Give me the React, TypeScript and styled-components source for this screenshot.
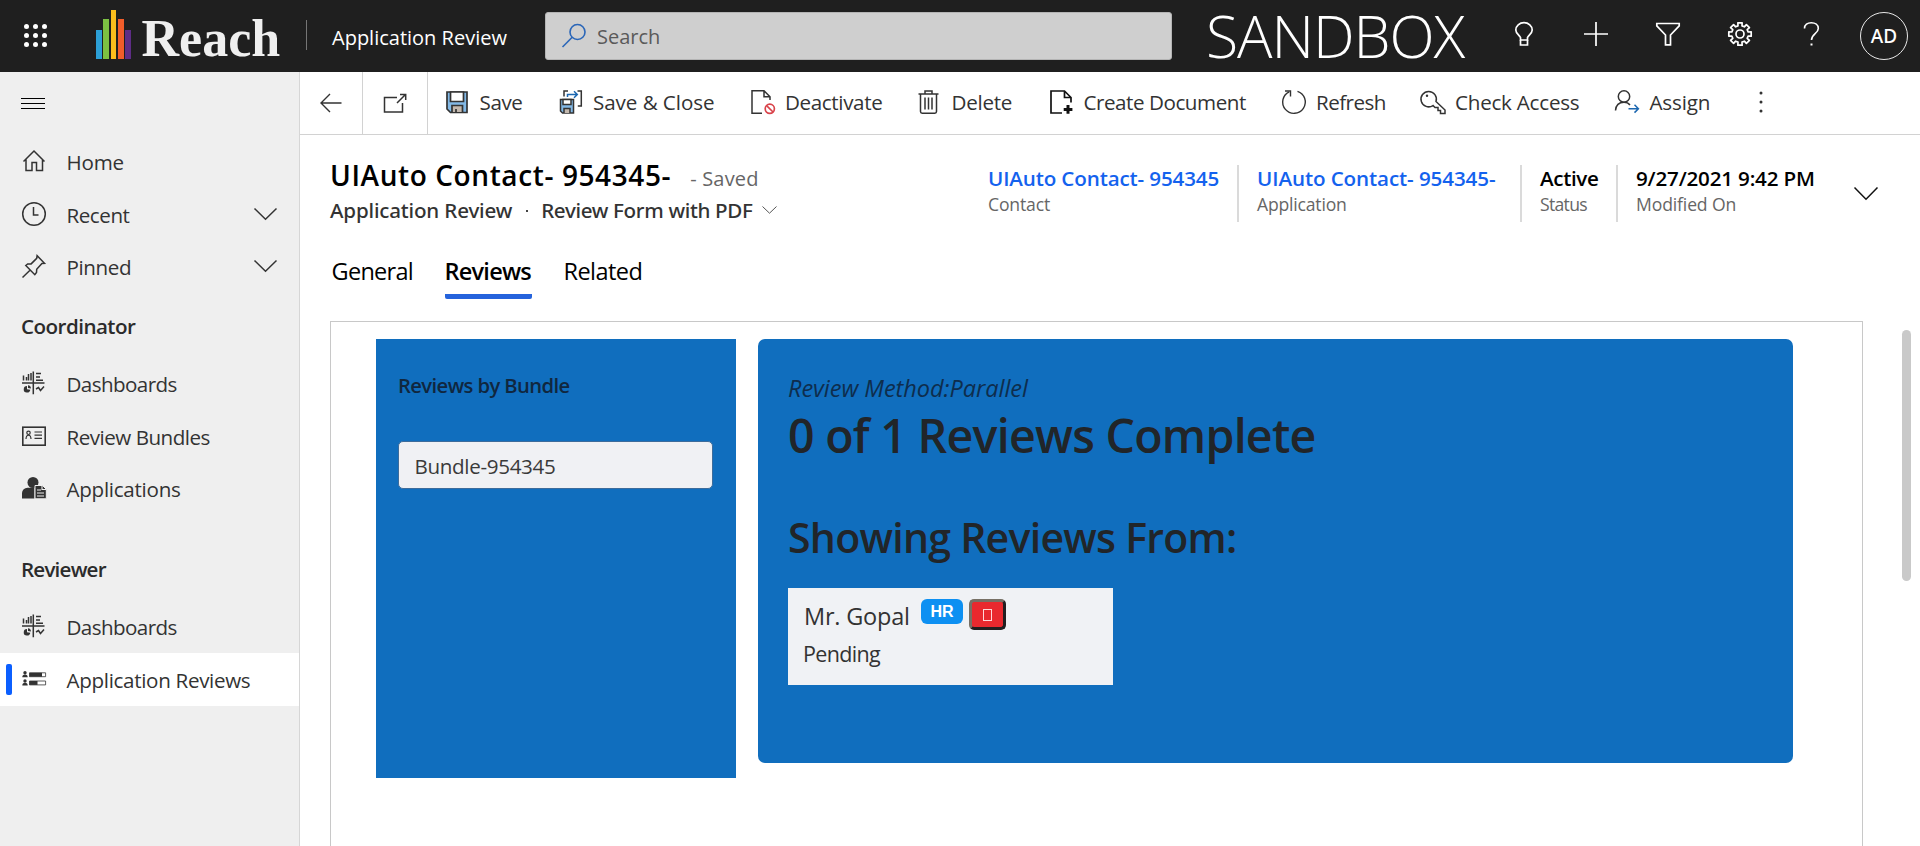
import React from "react";
import styled, { createGlobalStyle } from "styled-components";

const GlobalStyle = createGlobalStyle`
  * { box-sizing: border-box; }
  body {
    margin: 0;
    background: #fff;
    color: #333;
    font-family: "Open Sans", "Noto Sans", sans-serif;
    overflow: hidden;
  }
`;

const Page = styled.div`
  display: flex;
  flex-direction: column;
  width: 1920px;
  height: 846px;
  overflow: hidden;
`;

/* ---------- top bar ---------- */

const TopBar = styled.header`
  display: flex;
  align-items: center;
  flex: none;
  height: 72px;
  background: #1f1f1f;
  color: #fff;
`;

const Waffle = styled.div`
  display: grid;
  grid-template-columns: repeat(3, 5px);
  gap: 4px;
  margin: 0 49px 2px 24px;
`;

const WaffleDot = styled.i`
  width: 5px;
  height: 5px;
  border-radius: 50%;
  background: #fff;
`;

const Logo = styled.div`
  display: flex;
  align-items: flex-end;
  width: 210px;
  height: 72px;
`;

const LogoBars = styled.div`
  display: flex;
  align-items: flex-end;
  gap: 1.4px;
  width: 45.5px;
  padding-bottom: 13.5px;
`;

const LogoBar = styled.i<{ $h: number; $c: string }>`
  width: 5.9px;
  height: ${(p) => p.$h}px;
  background: ${(p) => p.$c};
`;

const LogoName = styled.span`
  height: 69px;
  color: #efefef;
  font: bold 52px/72px "Liberation Serif", serif;
`;

const BarDivider = styled.i`
  width: 1px;
  height: 30px;
  margin-bottom: 2px;
  background: #757575;
`;

const AppName = styled.span`
  width: 213px;
  margin-left: 25px;
  padding-top: 3px;
  font-size: 20px;
  line-height: 28px;
  white-space: nowrap;
`;

const SearchBox = styled.div`
  display: flex;
  align-items: center;
  gap: 11px;
  width: 627px;
  height: 48px;
  padding-left: 16px;
  border: 1px solid #b4b4b4;
  border-radius: 3px;
  background: #cfcfcf;
  color: #5a5a5a;
  font-size: 20px;
  line-height: 28px;
`;

const SearchHint = styled.span`
  padding-top: 2px;
`;

const EnvName = styled.span`
  align-self: flex-start;
  width: 282px;
  margin-left: 34px;
  font-size: 59px;
  font-weight: 300;
  line-height: 70px;
  letter-spacing: -1.07px;
`;

const BarCell = styled.div`
  display: flex;
  align-items: center;
  justify-content: center;
  width: 72px;
  height: 72px;
  padding-bottom: 4px;
`;

const Avatar = styled.div`
  flex: none;
  width: 48px;
  height: 48px;
  margin-top: 4px;
  border: 1.5px solid #e8e8e8;
  border-radius: 50%;
  font-family: "Noto Sans", sans-serif;
  font-size: 19px;
  font-weight: 500;
  line-height: 47px;
  text-align: center;
`;

/* ---------- navigation ---------- */

const Columns = styled.div`
  display: flex;
  flex: 1;
  min-height: 0;
`;

const Sidebar = styled.nav`
  flex: none;
  width: 300px;
  border-right: 1px solid #d6d6d6;
  background: #efefef;
`;

const MenuToggle = styled.div`
  display: flex;
  flex-direction: column;
  gap: 4px;
  height: 63px;
  padding: 26px 0 0 21px;
`;

const MenuLine = styled.i`
  width: 24px;
  height: 1px;
  background: #000;
`;

const NavItem = styled.div<{ $active?: boolean; $ls: number }>`
  display: flex;
  align-items: center;
  height: ${(p) => (p.$active ? 53.5 : 52.5)}px;
  padding: ${(p) => (p.$active ? "0 22px 0 6px" : "0 22px")};
  background: ${(p) => (p.$active ? "#fff" : "transparent")};
  font-size: 20.6px;
  line-height: 28px;
  letter-spacing: ${(p) => p.$ls}px;
`;

const ActiveMark = styled.i`
  width: 6px;
  height: 31px;
  margin-right: 10px;
  border-radius: 2px;
  background: #0b5fff;
`;

const NavLabel = styled.span`
  flex: 1;
  padding: 2px 0 0 20.5px;
  white-space: nowrap;
`;

const NavHeading = styled.h3<{ $top: number; $ls: number }>`
  margin: 0;
  padding: ${(p) => p.$top}px 0 17px 21px;
  color: #2b2b2b;
  font-size: 20.6px;
  font-weight: 600;
  line-height: 28px;
  letter-spacing: ${(p) => p.$ls}px;
`;

/* ---------- command bar ---------- */

const Main = styled.main`
  display: flex;
  flex-direction: column;
  flex: 1;
  min-width: 0;
`;

const CommandBar = styled.div`
  display: flex;
  align-items: center;
  flex: none;
  height: 63px;
  border-bottom: 1px solid #d2d2d2;
`;

const IconCommand = styled.div<{ $w: number }>`
  display: flex;
  align-items: center;
  justify-content: center;
  width: ${(p) => p.$w}px;
  height: 62px;
  padding: 0 1px 1px 0;
  border-right: 1px solid #d2d2d2;
`;

const Commands = styled.div`
  display: flex;
  align-items: center;
  padding: 0 0 2px 17px;
`;

const Command = styled.div<{ $w: number; $ls: number }>`
  display: flex;
  align-items: center;
  gap: 10.5px;
  width: ${(p) => p.$w}px;
  font-size: 20.6px;
  line-height: 28px;
  letter-spacing: ${(p) => p.$ls}px;
  white-space: nowrap;
`;

/* ---------- record header ---------- */

const RecordHeader = styled.div`
  display: flex;
  justify-content: space-between;
  height: 120px;
  padding: 21px 42px 0 30px;
`;

const TitleRow = styled.div`
  display: flex;
  align-items: baseline;
  gap: 19px;
  height: 38px;
  line-height: 38px;
`;

const Title = styled.h1`
  margin: 0;
  color: #000;
  font-size: 28px;
  font-weight: 600;
  line-height: 38px;
  letter-spacing: 0.6px;
`;

const SaveState = styled.span`
  color: #666;
  font-size: 20px;
  letter-spacing: 0.2px;
`;

const SubtitleRow = styled.div`
  display: flex;
  align-items: center;
  margin-top: 1px;
  font-family: "Noto Sans", sans-serif;
  font-size: 20.6px;
  font-weight: 500;
  line-height: 28px;
  letter-spacing: -0.17px;
`;

const SubtitleDot = styled.i`
  width: 2px;
  height: 2px;
  margin: 2px 13px 0 14px;
  background: #444;
`;

const FormName = styled.span`
  padding-top: 1px;
  margin-right: 9px;
  letter-spacing: -0.33px;
`;

const Fields = styled.div`
  display: flex;
  height: 57px;
  margin-top: 9px;
`;

const Field = styled.div<{ $w: number; $first?: boolean }>`
  width: ${(p) => p.$w}px;
  padding-left: ${(p) => (p.$first ? 0 : 18)}px;
  border-left: ${(p) => (p.$first ? "none" : "2px solid #dadada")};
  white-space: nowrap;
`;

const FieldValue = styled.div<{ $link?: boolean; $ls: number }>`
  color: ${(p) => (p.$link ? "#1462ee" : "#000")};
  font-size: 20.6px;
  font-weight: 600;
  line-height: 26px;
  letter-spacing: ${(p) => p.$ls}px;
`;

const FieldLabel = styled.div<{ $ls: number }>`
  padding-top: 2px;
  color: #666;
  font-size: 17.6px;
  line-height: 22px;
  letter-spacing: ${(p) => p.$ls}px;
`;

const HeaderToggle = styled.div`
  padding-top: 22px;
`;

const Tabs = styled.div`
  display: flex;
  gap: 32px;
  height: 66px;
  padding-left: 31.5px;
`;

const Tab = styled.div<{ $active?: boolean; $w: number; $ls: number }>`
  width: ${(p) => p.$w}px;
  height: 44px;
  border-bottom: 5px solid ${(p) => (p.$active ? "#2563dc" : "transparent")};
  border-radius: 2px;
  color: #000;
  font-size: 23.5px;
  font-weight: ${(p) => (p.$active ? 600 : 400)};
  line-height: 32px;
  letter-spacing: ${(p) => p.$ls}px;
  white-space: nowrap;
`;

/* ---------- form body ---------- */

const FormArea = styled.div`
  display: flex;
  flex: 1;
  min-height: 0;
  padding-left: 30px;
`;

const Section = styled.section`
  display: flex;
  align-items: flex-start;
  gap: 22px;
  width: 1533px;
  padding: 17px 0 0 45px;
  border: 1px solid #c8c8c8;
  border-bottom: none;
`;

const ScrollTrack = styled.div`
  padding: 9px 0 0 39px;
`;

const ScrollThumb = styled.div`
  width: 9px;
  height: 251px;
  border-radius: 5px;
  background: #c9c9c9;
`;

const BundlePanel = styled.div`
  width: 360px;
  height: 439px;
  padding: 32px 22px;
  background: #106ebe;
  color: #212529;
`;

const BundleTitle = styled.h4`
  margin: 0;
  color: #10273f;
  font-size: 20.2px;
  font-weight: 600;
  line-height: 28px;
  letter-spacing: -0.58px;
`;

const BundleOption = styled.div`
  width: 315px;
  height: 48px;
  margin-top: 42px;
  padding: 1px 0 0 15.5px;
  border: 1px solid #3d6c9b;
  border-radius: 5px;
  background: #f0f1f4;
  color: #3a3a3a;
  font-size: 20.6px;
  line-height: 46px;
  letter-spacing: -0.33px;
`;

const ReviewPanel = styled.div`
  width: 1035px;
  height: 424px;
  padding: 33px 30px;
  border-radius: 7px;
  background: #106ebe;
  color: #212529;
`;

const Method = styled.div`
  color: #0e2d4d;
  font-size: 23.5px;
  font-style: italic;
  line-height: 32px;
  letter-spacing: -0.03px;
`;

const Progress = styled.h1`
  margin: 3px 0 0;
  font-size: 46.5px;
  font-weight: 600;
  line-height: 56px;
  letter-spacing: -0.73px;
`;

const Showing = styled.h2`
  margin: 49px 0 0;
  font-size: 41px;
  font-weight: 600;
  line-height: 50px;
  letter-spacing: -0.72px;
`;

const ReviewerCard = styled.div`
  width: 325px;
  height: 97px;
  margin-top: 26px;
  padding: 11px 15px;
  background: #f0f2f5;
  color: #333;
`;

const ReviewerRow = styled.div`
  display: flex;
  align-items: flex-start;
  height: 40px;
`;

const ReviewerName = styled.span`
  width: 118px;
  padding: 1px 0 0 1px;
  font-size: 23.5px;
  line-height: 32px;
  letter-spacing: -0.2px;
`;

const RoleBadge = styled.span`
  width: 42px;
  height: 25px;
  border-radius: 6px;
  background: #0d90f2;
  color: #fff;
  font: bold 16px/25px "Liberation Sans", sans-serif;
  text-align: center;
`;

const RemoveButton = styled.div`
  display: flex;
  align-items: center;
  justify-content: center;
  width: 37px;
  height: 31px;
  margin-left: 6px;
  border: 3px solid;
  border-color: #777065 #231f20 #231f20 #777065;
  border-radius: 5px;
  background: #e9292e;
`;

const MissingGlyph = styled.i`
  width: 9px;
  height: 12px;
  border: 1px solid #ffd9d9;
`;

const ReviewStatus = styled.div`
  margin-top: 1px;
  font-size: 21.5px;
  line-height: 28px;
  letter-spacing: -0.65px;
`;

/* ---------- icons ---------- */

const Svg = styled.svg`
  flex: none;
  display: block;
  fill: none;
  overflow: visible;
`;

type IconProps = { children: React.ReactNode; c?: string; s?: number; w?: number; h?: number };
const Icon = ({ children, c = "#333", s = 1.5, w = 24, h = 24 }: IconProps) => (
  <Svg width={w} height={h} viewBox={`0 0 ${w} ${h}`} stroke={c} strokeWidth={s}>
    {children}
  </Svg>
);

const Chevron = ({ w = 23, h = 12, s = 1.5, c = "#333" }) => (
  <Icon w={w} h={h} s={s} c={c}>
    <path d={`M.5 .5 ${w / 2} ${h - 0.8} ${w - 0.5} .5`} />
  </Icon>
);

const HomeIcon = () => (
  <Icon>
    <path d="M1.5 12.5 12 2l10.500 10.500M4 10.500V21.500h6v-8h4.500v8H20.500V10.500" />
  </Icon>
);

const ClockIcon = () => (
  <Icon>
    <circle cx="12" cy="12" r="11.300" />
    <path d="M11.500 5v8h5" />
  </Icon>
);

const PinIcon = () => (
  <Icon>
    <path d="M.5 23.500 8 16.300M3.800 11.500l9 9.200 1.700-2.200.200-3.200 5.200-5.800 2.600-.2-7.400-7.600-.4 2.600-5.600 5.600-3.400.1z" />
  </Icon>
);

const DashboardIcon = () => (
  <Icon s={1.5}>
    <path d="M0 12h22.500M11.300.5v22.800M1.500 4.500v5M4.500 6v3.500M6.500 3v6.500M9 2v7.500" />
    <path d="M14 2.500h5M14 6h4M14 9.300h7M14 18l2.500-1.500 2 3 3.500-4" />
    <path d="M5 15a3.300 3.300 0 1 0 3.300 3.800L5 18.300z" fill="#333" stroke="none" />
    <path d="M6 14.200a3.500 3.500 0 0 1 3 3.300L6 17z" fill="#333" stroke="none" />
  </Icon>
);

const BundleIcon = () => (
  <Icon s={1.6}>
    <rect x=".8" y="3.200" width="22.400" height="18" />
    <circle cx="6.500" cy="8.800" r="1.700" strokeWidth="1.200" />
    <path d="M4 15c.2-5 4.800-5 5 0M12.500 8h7.500M12.500 11.200h7.500M12.500 14.400h7.500" strokeWidth="1.200" />
  </Icon>
);

const ApplicantIcon = () => (
  <Icon s={0}>
    <g fill="#333">
      <circle cx="11" cy="6.500" r="5.500" />
      <path d="M0 22.500v-5.500a5.500 5.500 0 0 1 5.500-5.300h7V22.500z" />
      <path d="M13 9.500h7.500l3.800 3.800V22.800H13z" stroke="#efefef" strokeWidth="1" />
    </g>
    <path d="M15 14h4M15 17h7M15 20h7M20 9.500v4h4" stroke="#efefef" strokeWidth="1.100" />
  </Icon>
);

const ReviewsIcon = () => (
  <Icon s={0.8}>
    <g fill="#333" stroke="none">
      <circle cx="3" cy="5.800" r="1.700" />
      <path d="M.3 10.300a2.700 2.700 0 0 1 5.400 0z" />
      <circle cx="3" cy="14" r="1.700" />
      <path d="M.3 18.500a2.700 2.700 0 0 1 5.400 0z" />
      <rect x="7.500" y="5.800" width="12.500" height="3.900" />
      <rect x="7.500" y="14" width="8" height="3.900" />
    </g>
    <path d="M7.500 5.800H23.600v3.900H7.500zM7.500 14H23.600v3.900H7.500z" />
  </Icon>
);

const BackIcon = () => (
  <Icon s={1.4} w={22} h={20}>
    <path d="M10 1 1 10l9 9M1 10h20.500" />
  </Icon>
);

const PopOutIcon = () => (
  <Icon s={1.5}>
    <path d="M14 6.500H1.500V21H19.500V12" />
    <path d="M14 12 22.500 3.500M17 3.500h5.700V9" />
  </Icon>
);

const SaveIcon = () => (
  <Icon s={1.7}>
    <path d="M2 2h20v20.500H5.500L2 19z" fill="#83b9e6" />
    <path d="M5.500 2h13v9.500h-13z" fill="#fff" />
    <path d="M7 22v-6.500h10.500V22" fill="#c3b8ae" />
    <path d="M11 19v3" />
  </Icon>
);

const SaveCloseIcon = () => (
  <Icon s={1.5}>
    <path d="M1.500 9.500h13V23H3.500l-2-2z" fill="#83b9e6" />
    <path d="M4 9.500h8v5H4z" fill="#fff" />
    <path d="M5 23v-4.500h6V23" fill="#c3b8ae" />
    <path d="M5 6.500V1h4M18.500 1H22.300v15h-3.500" />
    <path d="M8.500 7V4.500h9.500M15 1.300 18.300 4.500 15 7.700" stroke="#1c67b0" />
  </Icon>
);

const DeactivateIcon = () => (
  <Icon s={1.5}>
    <path d="M11 23.200H1V.8h12l6 6V10M13 .8v6h6" />
    <circle cx="18.800" cy="18.800" r="4.600" stroke="#d9434a" strokeWidth="1.700" />
    <path d="m15.600 15.600 6.400 6.400" stroke="#d9434a" strokeWidth="1.700" />
  </Icon>
);

const DeleteIcon = () => (
  <Icon s={1.5}>
    <path d="M1.500 4h20M8 4V1h7v3M3.500 4v17.500q0 1.700 1.700 1.700h12.600q1.700 0 1.700-1.700V4M8 7.500v12M11.500 7.500v12M15 7.500v12" />
  </Icon>
);

const CreateDocIcon = () => (
  <Icon s={1.7} c="#111">
    <path d="M13 23H2V1H15.500l6.500 6.500v5M15.500 1v6.500h6.500" />
    <path d="M19 15v8.700M14.700 19.400h8.700" strokeWidth="3" />
  </Icon>
);

const RefreshIcon = () => (
  <Icon s={1.4}>
    <path d="M15.500 1.300A11.300 11.300 0 1 1 7.200 1.800" />
    <path d="M3 1h5.500V6.500" />
  </Icon>
);

const KeyIcon = () => (
  <Icon s={1.5}>
    <path d="M15 11.500 24 20v3.500h-4.500V20.500h-2.500V17.500h-3l-2-2a7.700 7.700 0 1 1 3-4z" />
    <circle cx="6" cy="5.800" r="1.200" fill="#333" stroke="none" />
  </Icon>
);

const AssignIcon = () => (
  <Icon s={1.5}>
    <circle cx="9" cy="6.500" r="5.700" />
    <path d="M.5 20.500C1 14.500 4.500 12.300 9 12.300c2.800 0 4.600 1 6 2.700" />
    <path d="M13.500 18.700h9.500M19.500 14.800l3.900 3.900-3.900 3.900" stroke="#1c67b0" />
  </Icon>
);

const MoreIcon = () => (
  <Icon w={4} s={0}>
    <g fill="#333">
      <circle cx="2" cy="3" r="1.500" />
      <circle cx="2" cy="12" r="1.500" />
      <circle cx="2" cy="21" r="1.500" />
    </g>
  </Icon>
);

const SearchIcon = () => (
  <Icon c="#2a66b8" s={1.6}>
    <circle cx="15.500" cy="8" r="7.500" />
    <path d="M10.200 13.300.5 23" />
  </Icon>
);

const BulbIcon = () => (
  <Icon c="#fff" s={1.7}>
    <path d="M8.500 18v-2.500C7.500 13 3.800 11.500 3.800 8a8.200 7.300 0 0 1 16.400 0c0 3.500-3.700 5-4.700 7.500V18z" />
    <path d="M8.500 18v5h7v-5" />
  </Icon>
);

const PlusIcon = () => (
  <Icon c="#fff" s={1.7}>
    <path d="M12 0v24M0 12h24" />
  </Icon>
);

const FunnelIcon = () => (
  <Icon c="#fff" s={1.7}>
    <path d="M.8 1.500h22.400v2.300L14.500 13v9.800h-5V13L.8 3.800z" />
  </Icon>
);

const gear = (() => {
  const pts: string[] = [];
  for (let i = 0; i < 8; i++) {
    const a = (i * Math.PI) / 4;
    [
      [-0.24, 8.4],
      [-0.19, 11.4],
      [0.19, 11.4],
      [0.24, 8.4],
    ].forEach(([d, r]) =>
      pts.push(`${(12 + r * Math.cos(a + d)).toFixed(2)} ${(12 + r * Math.sin(a + d)).toFixed(2)}`)
    );
  }
  return `M${pts.join("L")}Z`;
})();

const GearIcon = () => (
  <Icon c="#fff" s={1.7}>
    <path d={gear} strokeLinejoin="round" />
    <circle cx="12" cy="12" r="4" />
  </Icon>
);

const HelpIcon = () => (
  <Icon c="#fff" s={1.6}>
    <path d="M4.500 6.500C4.500 2.500 7.500 .8 11.300.8s7 2 7 5.700c0 5-6.800 5.500-6.800 11.500" />
    <path d="M11.500 21.500v2" strokeWidth="2" />
  </Icon>
);

/* ---------- data ---------- */

const logoBars: [number, string][] = [
  [28.5, "#2c9fd6"],
  [40, "#7cc142"],
  [48.5, "#fbbd1c"],
  [40, "#f15d2a"],
  [28.5, "#5e2d86"],
];

const commands = [
  { label: "Save", icon: <SaveIcon />, w: 113.5, ls: -0.4 },
  { label: "Save & Close", icon: <SaveCloseIcon />, w: 192, ls: -0.06 },
  { label: "Deactivate", icon: <DeactivateIcon />, w: 166.5, ls: -0.36 },
  { label: "Delete", icon: <DeleteIcon />, w: 132, ls: -0.26 },
  { label: "Create Document", icon: <CreateDocIcon />, w: 232.5, ls: -0.45 },
  { label: "Refresh", icon: <RefreshIcon />, w: 139, ls: -0.55 },
  { label: "Check Access", icon: <KeyIcon />, w: 194.5, ls: -0.23 },
  { label: "Assign", icon: <AssignIcon />, w: 144, ls: -0.15 },
];

export default function App() {
  return (
    <Page>
      <GlobalStyle />
      <TopBar>
        <Waffle>
          {Array.from({ length: 9 }, (_, i) => (
            <WaffleDot key={i} />
          ))}
        </Waffle>
        <Logo>
          <LogoBars>
            {logoBars.map(([h, c]) => (
              <LogoBar key={c} $h={h} $c={c} />
            ))}
          </LogoBars>
          <LogoName>Reach</LogoName>
        </Logo>
        <BarDivider />
        <AppName>Application Review</AppName>
        <SearchBox>
          <SearchIcon />
          <SearchHint>Search</SearchHint>
        </SearchBox>
        <EnvName>SANDBOX</EnvName>
        <BarCell><BulbIcon /></BarCell>
        <BarCell><PlusIcon /></BarCell>
        <BarCell><FunnelIcon /></BarCell>
        <BarCell><GearIcon /></BarCell>
        <BarCell><HelpIcon /></BarCell>
        <BarCell><Avatar>AD</Avatar></BarCell>
      </TopBar>

      <Columns>
        <Sidebar>
          <MenuToggle>
            <MenuLine />
            <MenuLine />
            <MenuLine />
          </MenuToggle>
          <NavItem $ls={-0.21}><HomeIcon /><NavLabel>Home</NavLabel></NavItem>
          <NavItem $ls={-0.45}><ClockIcon /><NavLabel>Recent</NavLabel><Chevron /></NavItem>
          <NavItem $ls={-0.4}><PinIcon /><NavLabel>Pinned</NavLabel><Chevron /></NavItem>
          <NavHeading $top={19.5} $ls={-0.54}>Coordinator</NavHeading>
          <NavItem $ls={-0.58}><DashboardIcon /><NavLabel>Dashboards</NavLabel></NavItem>
          <NavItem $ls={-0.5}><BundleIcon /><NavLabel>Review Bundles</NavLabel></NavItem>
          <NavItem $ls={-0.27}><ApplicantIcon /><NavLabel>Applications</NavLabel></NavItem>
          <NavHeading $top={40.5} $ls={-0.8}>Reviewer</NavHeading>
          <NavItem $ls={-0.58}><DashboardIcon /><NavLabel>Dashboards</NavLabel></NavItem>
          <NavItem $active $ls={-0.32}>
            <ActiveMark />
            <ReviewsIcon />
            <NavLabel>Application Reviews</NavLabel>
          </NavItem>
        </Sidebar>

        <Main>
          <CommandBar>
            <IconCommand $w={63}><BackIcon /></IconCommand>
            <IconCommand $w={65}><PopOutIcon /></IconCommand>
            <Commands>
              {commands.map((c) => (
                <Command key={c.label} $w={c.w} $ls={c.ls}>
                  {c.icon}
                  <span>{c.label}</span>
                </Command>
              ))}
              <MoreIcon />
            </Commands>
          </CommandBar>

          <RecordHeader>
            <div>
              <TitleRow>
                <Title>UIAuto Contact- 954345-</Title>
                <SaveState>- Saved</SaveState>
              </TitleRow>
              <SubtitleRow>
                <span>Application Review</span>
                <SubtitleDot />
                <FormName>Review Form with PDF</FormName>
                <Chevron w={15} h={8} s={1} c="#555" />
              </SubtitleRow>
            </div>
            <Fields>
              <Field $w={249} $first>
                <FieldValue $link $ls={-0.14}>UIAuto Contact- 954345</FieldValue>
                <FieldLabel $ls={-0.16}>Contact</FieldLabel>
              </Field>
              <Field $w={283}>
                <FieldValue $link $ls={-0.1}>UIAuto Contact- 954345-</FieldValue>
                <FieldLabel $ls={-0.2}>Application</FieldLabel>
              </Field>
              <Field $w={96}>
                <FieldValue $ls={-0.35}>Active</FieldValue>
                <FieldLabel $ls={-0.7}>Status</FieldLabel>
              </Field>
              <Field $w={238}>
                <FieldValue $ls={-0.18}>9/27/2021 9:42 PM</FieldValue>
                <FieldLabel $ls={-0.14}>Modified On</FieldLabel>
              </Field>
              <HeaderToggle>
                <Chevron w={24} h={13} s={1.5} c="#111" />
              </HeaderToggle>
            </Fields>
          </RecordHeader>

          <Tabs>
            <Tab $w={81} $ls={-0.7}>General</Tab>
            <Tab $w={87} $ls={-0.75} $active>Reviews</Tab>
            <Tab $w={80} $ls={-0.55}>Related</Tab>
          </Tabs>

          <FormArea>
            <Section>
              <BundlePanel>
                <BundleTitle>Reviews by Bundle</BundleTitle>
                <BundleOption>Bundle-954345</BundleOption>
              </BundlePanel>
              <ReviewPanel>
                <Method>Review Method:Parallel</Method>
                <Progress>0 of 1 Reviews Complete</Progress>
                <Showing>Showing Reviews From:</Showing>
                <ReviewerCard>
                  <ReviewerRow>
                    <ReviewerName>Mr. Gopal</ReviewerName>
                    <RoleBadge>HR</RoleBadge>
                    <RemoveButton>
                      <MissingGlyph />
                    </RemoveButton>
                  </ReviewerRow>
                  <ReviewStatus>Pending</ReviewStatus>
                </ReviewerCard>
              </ReviewPanel>
            </Section>
            <ScrollTrack>
              <ScrollThumb />
            </ScrollTrack>
          </FormArea>
        </Main>
      </Columns>
    </Page>
  );
}
